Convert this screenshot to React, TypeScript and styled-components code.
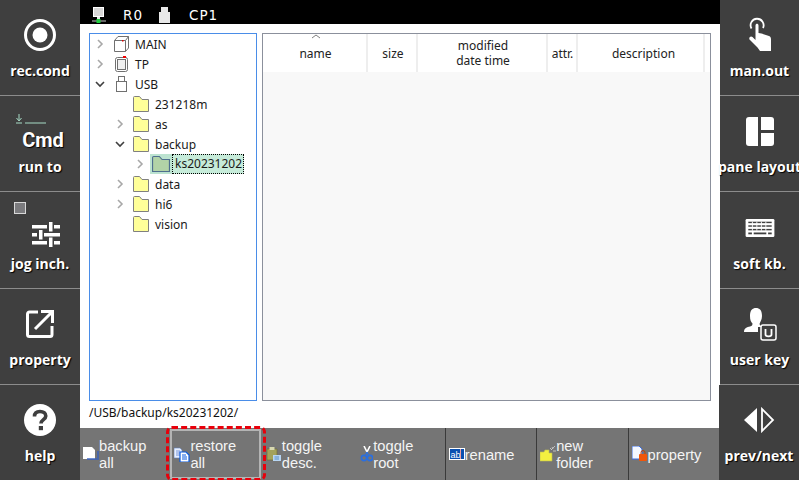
import React from "react";
import styled, { createGlobalStyle } from "styled-components";

const GlobalStyle = createGlobalStyle`
  html, body {
    margin: 0;
    padding: 0;
    background: #fff;
  }
  * {
    box-sizing: border-box;
  }
`;

const Screen = styled.div`
  display: flex;
  width: 799px;
  height: 480px;
  font-family: "Open Sans", "Noto Sans", sans-serif;
`;

const SideBar = styled.div<{ $width: number }>`
  display: flex;
  flex-direction: column;
  flex: none;
  width: ${({ $width }) => $width}px;
  height: 480px;
  background: #3f3f3f;
`;

const SideItem = styled.div<{ $last?: boolean; $overlap?: boolean }>`
  position: relative;
  display: flex;
  flex-direction: column;
  align-items: center;
  flex: none;
  height: ${({ $last }) => ($last ? "95px" : "96px")};
  padding-top: 8px;
  background: #3f3f3f;
  border-bottom: ${({ $last }) => ($last ? "none" : "1px solid #8c8c8c")};
  margin-left: ${({ $overlap }) => ($overlap ? "-1px" : "0")};

  &:nth-child(3) {
    height: 97px;
    padding-top: 9px;
  }
`;

const SideIcon = styled.div`
  display: flex;
  flex-direction: column;
  align-items: center;
  justify-content: center;
  height: 54px;
  color: #fff;
`;

const SideLabel = styled.div`
  height: 18px;
  line-height: 18px;
  font-size: 14px;
  font-weight: 700;
  color: #fff;
  white-space: nowrap;
  text-shadow: 1px 1px 1px #000;
`;

const CmdText = styled.div`
  font-family: "Roboto", sans-serif;
  font-size: 20px;
  font-weight: 700;
  line-height: 22px;
  margin-left: 6px;
  color: #fff;
  text-shadow: 1px 1px 1px #000;
`;

const CmdMark = styled.svg`
  display: block;
  margin: 2px 0 5px -18px;
`;

const JogCheck = styled.div`
  position: absolute;
  top: 10px;
  left: 14px;
  width: 12px;
  height: 12px;
  background: #7b7b7e;
  border: 1px solid #d8d8d8;
`;

const SliderSlot = styled.div`
  display: flex;
  margin: 12px 0 0 12px;
`;

const Main = styled.div`
  display: flex;
  flex-direction: column;
  flex: none;
  width: 640px;
  height: 480px;
  background: #fff;
`;

const StatusBar = styled.div`
  display: flex;
  align-items: center;
  flex: none;
  height: 24px;
  padding: 5px 0 0 12px;
  background: #000;
  color: #fff;
  font-family: "DejaVu Sans", sans-serif;
  font-size: 13.5px;
  letter-spacing: 1px;
`;

const StatusText = styled.span<{ $left: number; $width: number }>`
  margin-left: ${({ $left }) => $left}px;
  width: ${({ $width }) => $width}px;
`;

const Panels = styled.div`
  display: flex;
  gap: 5px;
  flex: 1;
  min-height: 0;
  padding: 9px 9px 0;
`;

const TreePanel = styled.div`
  flex: none;
  width: 168px;
  border: 1px solid #4a8de8;
  background: #fff;
`;

const TreeRow = styled.div<{ $depth: number }>`
  display: flex;
  align-items: center;
  height: 20px;
  padding-left: ${({ $depth }) => 5 + $depth * 20}px;
  font-family: "Noto Sans", sans-serif;
  font-size: 12px;
  color: #1a1a1a;
  white-space: nowrap;
`;

const Chevron = styled.span`
  display: flex;
  align-items: center;
  flex: none;
  width: 17px;
`;

const TreeIcon = styled.span<{ $selected?: boolean }>`
  display: flex;
  align-items: center;
  justify-content: center;
  flex: none;
  height: 20px;
  width: ${({ $selected }) => ($selected ? "22px" : "18px")};
  margin-left: ${({ $selected }) => ($selected ? "-2px" : "0")};
  background: ${({ $selected }) => ($selected ? "#bce3d0" : "transparent")};
`;

const TreeLabel = styled.span<{ $selected?: boolean }>`
  height: ${({ $selected }) => ($selected ? "20px" : "auto")};
  line-height: ${({ $selected }) => ($selected ? "17px" : "normal")};
  margin-left: ${({ $selected }) => ($selected ? "0" : "5px")};
  padding: ${({ $selected }) => ($selected ? "0 1px 0 2px" : "0")};
  background: ${({ $selected }) => ($selected ? "#c6ebd9" : "transparent")};
  border: ${({ $selected }) => ($selected ? "1px dotted #000" : "none")};
`;

const ListPanel = styled.div`
  display: flex;
  flex-direction: column;
  flex: 1;
  border: 1px solid #8b909c;
  background: #f8f8f8;
`;

const ListHeader = styled.div`
  display: flex;
  flex: none;
  height: 38px;
  background: #fff;
`;

const HeaderCell = styled.div<{ $width: number; $shift: number }>`
  position: relative;
  display: flex;
  align-items: center;
  justify-content: center;
  flex: none;
  width: ${({ $width }) => $width}px;
  padding-left: ${({ $shift }) => $shift}px;
  border-right: 2px solid #eeeeee;
  font-family: "Noto Sans", sans-serif;
  font-size: 12px;
  line-height: 15px;
  text-align: center;
  color: #222;
`;

const SortArrow = styled.svg`
  position: absolute;
  top: 0;
  left: 48px;
`;

const PathBar = styled.div`
  flex: none;
  height: 27px;
  padding: 2px 0 0 9px;
  line-height: 19px;
  font-family: "Noto Sans", sans-serif;
  font-size: 12px;
  color: #111;
`;

const ButtonBar = styled.div`
  display: grid;
  grid-template-columns: repeat(7, 1fr);
  flex: none;
  height: 52px;
  background: #757575;
`;

const BarButton = styled.div<{ $focus?: boolean; $divider?: boolean }>`
  position: relative;
  display: flex;
  align-items: center;
  padding-left: 3px;
  border-right: ${({ $divider }) => ($divider ? "1px solid #3a3a3a" : "none")};
  font-family: "Liberation Sans", sans-serif;
  font-size: 14.7px;
  line-height: 17px;
  color: #f4f4f4;

  ${({ $focus }) =>
    $focus
      ? `
    &::before {
      content: "";
      position: absolute;
      inset: 1px 2px 1px -1px;
      border: 2px solid #b4b4b4;
    }
    &::after {
      content: "";
      position: absolute;
      inset: -2px -3px -1px -5px;
      border: 3px dashed #e8000b;
      border-radius: 6px;
    }`
      : ""}
`;

const BarIcon = styled.svg`
  display: block;
  flex: none;
  width: 16px;
  height: 16px;
`;

const BarText = styled.span`
  display: block;
  padding-top: 2px;
`;

const RecIcon = () => (
  <svg width="34" height="34" viewBox="0 0 34 34">
    <circle cx="17" cy="17" r="14.5" fill="none" stroke="#fff" strokeWidth="3" />
    <circle cx="17" cy="17" r="7.5" fill="#fff" />
  </svg>
);

const SlidersIcon = () => (
  <svg width="28" height="25" viewBox="0 0 28 25" fill="#fff">
    <rect x="0" y="3" width="15" height="3.5" />
    <rect x="17" y="0" width="3.5" height="9.5" />
    <rect x="22" y="3" width="6" height="3.5" />
    <rect x="0" y="11" width="5" height="3.5" />
    <rect x="7" y="8" width="3.5" height="9.5" />
    <rect x="12" y="11" width="16" height="3.5" />
    <rect x="0" y="19" width="15" height="3.5" />
    <rect x="17" y="15.5" width="3.5" height="9.5" />
    <rect x="22" y="19" width="6" height="3.5" />
  </svg>
);

const ExternalIcon = () => (
  <svg width="30" height="30" viewBox="0 0 30 30" fill="none" stroke="#fff" strokeWidth="3">
    <path d="M13 3H4.5A2 2 0 0 0 2.5 5V25.5A2 2 0 0 0 4.5 27.5H25A2 2 0 0 0 27 25.5V17" />
    <path d="M10 20L26 4M16 2.5H27.5V14" />
  </svg>
);

const HelpIcon = () => (
  <svg width="34" height="34" viewBox="0 0 34 34">
    <circle cx="17" cy="17" r="16" fill="#fff" />
    <path d="M11.5 13.5C11.5 10 14 8.5 17 8.5C20.5 8.5 22.8 10.3 22.8 13C22.8 16.7 18 16.7 18 20.5" fill="none" stroke="#3f3f3f" strokeWidth="3.6" />
    <rect x="15.8" y="23" width="4.2" height="4.2" fill="#3f3f3f" />
  </svg>
);

const HandIcon = () => (
  <svg width="22" height="36" viewBox="0 0 22 36">
    <path d="M2.5 11.5A6.5 6.5 0 1 1 14 11" fill="none" stroke="#fff" strokeWidth="1.8" />
    <path d="M6.5 8.5C6.5 6.3 9.5 6.3 9.5 8.5V16L12.5 16.5L20 19C21.5 19.5 22 20.5 22 22.5V34H11L8.5 30.5L0.5 22.5C-0.5 20 2 18.5 3.5 20L6.5 23Z" fill="#fff" />
  </svg>
);

const PaneIcon = () => (
  <svg width="28" height="29" viewBox="0 0 28 29" fill="#fff">
    <path d="M3 0H12V29H3A3 3 0 0 1 0 26V3A3 3 0 0 1 3 0Z" />
    <path d="M15 0H25A3 3 0 0 1 28 3V13H15Z" />
    <path d="M15 16H28V26A3 3 0 0 1 25 29H15Z" />
  </svg>
);

const KeyboardIcon = () => (
  <svg width="32" height="18" viewBox="0 0 32 20">
    <rect width="32" height="20" rx="1.5" fill="#fff" />
    <g fill="#3f3f3f">
      <rect x="3" y="3" width="26" height="1.6" />
      <rect x="3" y="7" width="26" height="1.6" />
      <rect x="3" y="11" width="26" height="1.6" />
      <rect x="3" y="15" width="4" height="2" />
      <rect x="9" y="15" width="14" height="2" />
      <rect x="25" y="15" width="4" height="2" />
      <rect x="7" y="3" width="1" height="10" fill="#fff" />
      <rect x="12" y="3" width="1" height="10" fill="#fff" />
      <rect x="17" y="3" width="1" height="10" fill="#fff" />
      <rect x="22" y="3" width="1" height="10" fill="#fff" />
    </g>
  </svg>
);

const UserKeyIcon = () => (
  <svg width="34" height="34" viewBox="0 0 34 34">
    <path d="M7 9C7 3 9.5 1 13 1C16.5 1 19 3 19 9C19 13 17 15 16.5 17C17 19 19 20 22 20H15V25H1C1 21 4 20 7 19.5C9 19 9.5 18 9.5 16.5C8 15 7 13 7 9Z" fill="#fff" />
    <rect x="18" y="18" width="15" height="15" rx="2" fill="#3f3f3f" stroke="#fff" strokeWidth="1.5" />
    <path d="M22.5 22V27.5C22.5 30 28.5 30 28.5 27.5V22" fill="none" stroke="#fff" strokeWidth="1.8" />
  </svg>
);

const PrevNextIcon = () => (
  <svg width="32" height="26" viewBox="0 0 32 26">
    <path d="M14 1V25L1 13Z" fill="#fff" />
    <path d="M19 2V24L30 13Z" fill="none" stroke="#fff" strokeWidth="1.8" />
  </svg>
);

const ChevronIcon = ({ open }: { open?: boolean }) => (
  <svg width="10" height="10" viewBox="0 0 10 10" fill="none" strokeWidth="1.6">
    {open ? <path d="M1 3L5 7L9 3" stroke="#404040" /> : <path d="M3 1L7 5L3 9" stroke="#a8a8a8" />}
  </svg>
);

const FolderIcon = ({ selected }: { selected?: boolean }) => (
  <svg width={selected ? 18 : 16} height={16} viewBox="0 0 16 16" preserveAspectRatio="none">
    <path
      d="M0.5 15.5V1.5C0.5 0.9 0.9 0.5 1.5 0.5H6.5L9 3.5H15.5V15.5Z"
      fill={selected ? "#b2d3a7" : "#ffff99"}
      stroke={selected ? "#4f6f8f" : "#808080"}
    />
  </svg>
);

const CubeIcon = () => (
  <svg width="15" height="16" viewBox="0 0 15 16" fill="none" stroke="#707070">
    <path d="M0.5 4.5L4 0.5H14.5V12L11.5 15.5H0.5Z" fill="#fff" />
    <path d="M0.5 4.5H11.5V15.5M11.5 4.5L14.5 0.5" />
    <rect x="8" y="4" width="1.5" height="1.5" fill="#e00000" stroke="none" />
  </svg>
);

const TpIcon = () => (
  <svg width="13" height="16" viewBox="0 0 13 16" fill="none" stroke="#707070">
    <rect x="0.5" y="1.5" width="12" height="14" rx="2" fill="#fff" />
    <rect x="2.5" y="3.5" width="8" height="10" fill="#f0f0f0" />
    <rect x="8" y="0" width="3" height="2" fill="#f00000" stroke="none" />
  </svg>
);

const UsbIcon = ({ fill = "#fff", stroke = "#707070" }: { fill?: string; stroke?: string }) => (
  <svg width="11" height="16" viewBox="0 0 11 16" fill={fill} stroke={stroke}>
    <rect x="2.5" y="0.5" width="6" height="5" />
    <rect x="0.5" y="5.5" width="10" height="10" />
  </svg>
);

const NetworkIcon = () => (
  <svg width="14" height="16" viewBox="0 0 14 16">
    <rect x="1.5" y="0.5" width="10" height="9" fill="#d8d8d8" stroke="#fff" />
    <rect x="5" y="10" width="3" height="3" fill="#e8e8e8" />
    <rect x="0" y="13.5" width="14" height="1" fill="#c8c8c8" />
    <rect x="4.5" y="12" width="4" height="4" fill="#20d040" />
  </svg>
);

const BackupAllIcon = () => (
  <BarIcon viewBox="0 0 16 16">
    <path d="M0 1H9L12 4V13H0Z" fill="#fff" />
    <path d="M4 14H16V5H14V12H4Z" fill="#3560c0" opacity="0.7" />
  </BarIcon>
);

const RestoreAllIcon = () => (
  <BarIcon viewBox="0 0 16 16">
    <path d="M0 2H6L8 4V12H0Z" fill="#e8f0ff" stroke="#6080c0" strokeWidth="0.6" />
    <path d="M2 5H6M2 7H6M2 9H6" stroke="#5a7fd0" strokeWidth="0.8" />
    <path d="M6 6H12L15 9V16H6Z" fill="#fff" stroke="#0a5be0" strokeWidth="1.2" />
    <path d="M8 9H12M8 11H13M8 13H13" stroke="#0a5be0" />
  </BarIcon>
);

const ToggleDescIcon = () => (
  <BarIcon viewBox="0 0 16 16">
    <path d="M1 3H11V14H1Z" fill="#a3a25c" stroke="#6b6a30" strokeWidth="0.6" />
    <rect x="3.5" y="1" width="5" height="3" fill="#d8d8b0" />
    <path d="M7 9H15V15H7Z" fill="#b7d6f4" />
    <path d="M8.5 11H13M8.5 13H13" stroke="#5b8fc8" />
  </BarIcon>
);

const ToggleRootIcon = () => (
  <BarIcon viewBox="-5 0 16 16">
    <path d="M2 0L5 6L8 0" fill="none" stroke="#fff" strokeWidth="1.6" />
    <circle cx="2" cy="12" r="2.6" fill="none" stroke="#2a6fe0" strokeWidth="1.6" />
    <circle cx="8" cy="12" r="2.6" fill="none" stroke="#2a6fe0" strokeWidth="1.6" />
    <path d="M5 6L3 10M5 6L7 10" stroke="#2a6fe0" strokeWidth="1.2" />
  </BarIcon>
);

const NewFolderIcon = () => (
  <BarIcon viewBox="0 0 16 16">
    <path d="M0 6H4L5 4H9V7H12V15H0Z" fill="#f4f040" stroke="#bdbd50" strokeWidth="0.6" />
    <path d="M11 4L15 0M10 2L12 4M13 5L16 5M12 1L13 3" stroke="#d0d0d0" strokeWidth="0.8" />
  </BarIcon>
);

const PropertyIcon = () => (
  <BarIcon viewBox="0 0 16 16">
    <path d="M0 0H7L10 3V13H0Z" fill="#f4f8ff" stroke="#3f6fe0" />
    <rect x="7" y="8" width="8" height="7" rx="1" fill="#f0560a" />
    <path d="M9 8V6.5A2 2 0 0 1 13 6.5V8" fill="none" stroke="#c04000" />
  </BarIcon>
);

const RenameIcon = () => (
  <BarIcon viewBox="0 0 16 16">
    <rect x="0.5" y="2.5" width="15" height="11" fill="#0a50b0" stroke="#fff" />
    <text x="1.5" y="11.5" fontFamily="Liberation Sans, sans-serif" fontSize="9" fill="#fff">ab</text>
    <path d="M11.5 3V13" stroke="#f0a0a0" />
  </BarIcon>
);

const tree = [
  { depth: 0, name: "MAIN", chevron: "closed", icon: <CubeIcon /> },
  { depth: 0, name: "TP", chevron: "closed", icon: <TpIcon /> },
  { depth: 0, name: "USB", chevron: "open", icon: <UsbIcon /> },
  { depth: 1, name: "231218m" },
  { depth: 1, name: "as", chevron: "closed" },
  { depth: 1, name: "backup", chevron: "open" },
  { depth: 2, name: "ks20231202", chevron: "closed", selected: true },
  { depth: 1, name: "data", chevron: "closed" },
  { depth: 1, name: "hi6", chevron: "closed" },
  { depth: 1, name: "vision" },
];

const columns = [
  { width: 105, shift: 2, label: ["name"], sorted: true },
  { width: 50, shift: 2, label: ["size"] },
  { width: 130, shift: 2, label: ["modified", "date time"] },
  { width: 30, shift: 1, label: ["attr."] },
  { width: 127, shift: 6, label: ["description"] },
];

const buttons = [
  { icon: <BackupAllIcon />, label: ["backup", "all"] },
  { icon: <RestoreAllIcon />, label: ["restore", "all"], focus: true },
  { icon: <ToggleDescIcon />, label: ["toggle", "desc."] },
  { icon: <ToggleRootIcon />, label: ["toggle", "root"], divider: true },
  { icon: <RenameIcon />, label: ["rename"], divider: true },
  { icon: <NewFolderIcon />, label: ["new", "folder"], divider: true },
  { icon: <PropertyIcon />, label: ["property"] },
];

export default function App() {
  return (
    <>
      <GlobalStyle />
      <Screen>
        <SideBar $width={80}>
          <SideItem>
            <SideIcon><RecIcon /></SideIcon>
            <SideLabel>rec.cond</SideLabel>
          </SideItem>
          <SideItem>
            <SideIcon>
              <CmdMark width="30" height="10" viewBox="0 0 30 10">
                <path d="M3 0V6M0.5 4L3 7L5.5 4" stroke="#a7dcc6" fill="none" />
                <path d="M0 9H6M9 9H30" stroke="#a7dcc6" />
              </CmdMark>
              <CmdText>Cmd</CmdText>
            </SideIcon>
            <SideLabel>run to</SideLabel>
          </SideItem>
          <SideItem>
            <JogCheck />
            <SideIcon><SliderSlot><SlidersIcon /></SliderSlot></SideIcon>
            <SideLabel>jog inch.</SideLabel>
          </SideItem>
          <SideItem>
            <SideIcon><ExternalIcon /></SideIcon>
            <SideLabel>property</SideLabel>
          </SideItem>
          <SideItem $last>
            <SideIcon><HelpIcon /></SideIcon>
            <SideLabel>help</SideLabel>
          </SideItem>
        </SideBar>

        <Main>
          <StatusBar>
            <NetworkIcon />
            <StatusText $left={17} $width={36}>R0</StatusText>
            <UsbIcon fill="#e8e8e8" stroke="#e8e8e8" />
            <StatusText $left={19} $width={40}>CP1</StatusText>
          </StatusBar>

          <Panels>
            <TreePanel>
              {tree.map((node) => (
                <TreeRow key={node.name} $depth={node.depth}>
                  <Chevron>{node.chevron && <ChevronIcon open={node.chevron === "open"} />}</Chevron>
                  <TreeIcon $selected={node.selected}>
                    {node.icon ?? <FolderIcon selected={node.selected} />}
                  </TreeIcon>
                  <TreeLabel $selected={node.selected}>{node.name}</TreeLabel>
                </TreeRow>
              ))}
            </TreePanel>
            <ListPanel>
              <ListHeader>
                {columns.map((col) => (
                  <HeaderCell key={col.label[0]} $width={col.width} $shift={col.shift}>
                    {col.sorted && (
                      <SortArrow width="10" height="5" viewBox="0 0 10 5">
                        <path d="M1 4L5 1L9 4" fill="none" stroke="#808080" />
                      </SortArrow>
                    )}
                    <div>
                      {col.label.map((line) => (
                        <div key={line}>{line}</div>
                      ))}
                    </div>
                  </HeaderCell>
                ))}
              </ListHeader>
            </ListPanel>
          </Panels>

          <PathBar>/USB/backup/ks20231202/</PathBar>

          <ButtonBar>
            {buttons.map((btn) => (
              <BarButton key={btn.label.join(" ")} $focus={btn.focus} $divider={btn.divider}>
                {btn.icon}
                <BarText>
                  {btn.label.map((line) => (
                    <div key={line}>{line}</div>
                  ))}
                </BarText>
              </BarButton>
            ))}
          </ButtonBar>
        </Main>

        <SideBar $width={79}>
          <SideItem>
            <SideIcon><HandIcon /></SideIcon>
            <SideLabel>man.out</SideLabel>
          </SideItem>
          <SideItem>
            <SideIcon><PaneIcon /></SideIcon>
            <SideLabel>pane layout</SideLabel>
          </SideItem>
          <SideItem>
            <SideIcon><KeyboardIcon /></SideIcon>
            <SideLabel>soft kb.</SideLabel>
          </SideItem>
          <SideItem>
            <SideIcon><UserKeyIcon /></SideIcon>
            <SideLabel>user key</SideLabel>
          </SideItem>
          <SideItem $last $overlap>
            <SideIcon><PrevNextIcon /></SideIcon>
            <SideLabel>prev/next</SideLabel>
          </SideItem>
        </SideBar>
      </Screen>
    </>
  );
}
